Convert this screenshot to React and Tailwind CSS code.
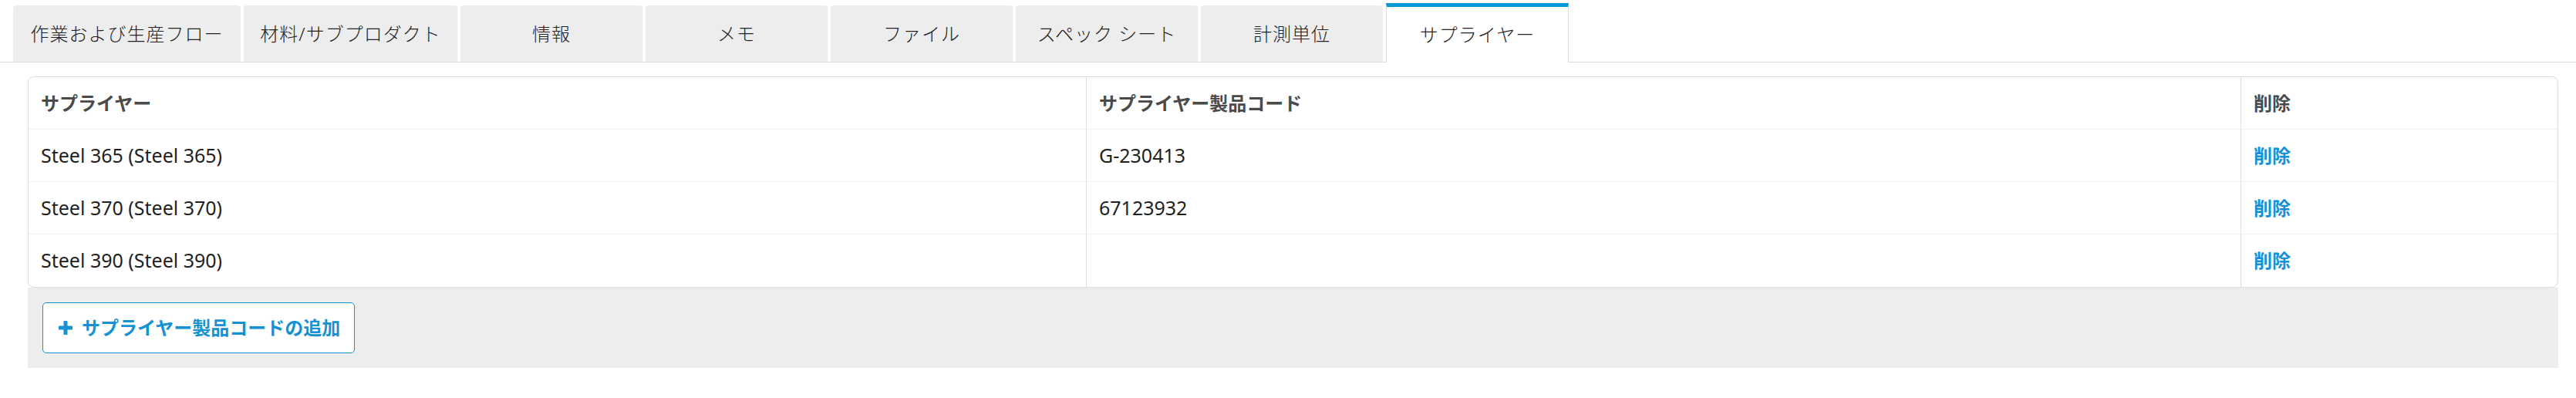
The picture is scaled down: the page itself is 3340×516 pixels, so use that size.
import React from "react";

const FONT = { fontFamily: '"Noto Sans", "Noto Sans CJK JP", sans-serif' };

const tabs = [
  { label: "作業および生産フロー", w: "w-[295px]" },
  { label: "材料/サブプロダクト", w: "w-[277px]" },
  { label: "情報", w: "w-[236px]" },
  { label: "メモ", w: "w-[236px]" },
  { label: "ファイル", w: "w-[236px]" },
  { label: "スペック シート", w: "w-[236px]" },
  { label: "計測単位", w: "w-[236px]" },
];

const rows = [
  { supplier: "Steel 365 (Steel 365)", code: "G-230413" },
  { supplier: "Steel 370 (Steel 370)", code: "67123932" },
  { supplier: "Steel 390 (Steel 390)", code: "" },
];

function PlusIcon() {
  return (
    <svg width="18" height="18" viewBox="0 0 18 18" className="shrink-0">
      <rect x="6.5" y="0" width="5" height="18" rx="1" fill="#1592d3" />
      <rect x="0" y="6.5" width="18" height="5" rx="1" fill="#1592d3" />
    </svg>
  );
}

export default function App() {
  return (
    <div className="w-[3340px] h-[516px] bg-white overflow-hidden" style={FONT}>
      {/* Tabs */}
      <div className="h-[81px] flex items-end gap-[4px] pl-[17px] border-b border-[#dddddd]">
        {tabs.map((t) => (
          <div
            key={t.label}
            className={`${t.w} h-[73px] bg-[#ededed] rounded-t-[4px] flex items-center justify-center text-[24px] font-light tracking-[1px] text-[#222222] whitespace-nowrap`}
          >
            {t.label}
          </div>
        ))}
        <div className="w-[237px] h-[77px] -mb-px bg-white border-t-[5px] border-x border-t-[#0796d8] border-x-[#dddddd] flex items-center justify-center text-[24px] font-light tracking-[1px] text-[#222222] whitespace-nowrap">
          サプライヤー
        </div>
      </div>

      {/* Content */}
      <div className="mt-[18px] pl-[36px] pr-[23px]">
        <div className="border border-[#dddddd] rounded-[8px] bg-white">
          <div className="grid grid-cols-[1371px_1497px_1fr]">
            {/* header */}
            <div className="h-[68px] flex items-center pl-[16px] border-b border-[#f0f0f0] text-[24px] font-bold text-[#4a4a4a]">
              サプライヤー
            </div>
            <div className="h-[68px] flex items-center pl-[16px] border-b border-l border-b-[#f0f0f0] border-l-[#dddddd] text-[24px] font-bold text-[#4a4a4a]">
              サプライヤー製品コード
            </div>
            <div className="h-[68px] flex items-center pl-[16px] border-b border-l border-b-[#f0f0f0] border-l-[#dddddd] text-[24px] font-bold text-[#4a4a4a]">
              削除
            </div>
            {rows.map((r, i) => {
              const last = i === rows.length - 1;
              const bb = last ? "" : "border-b border-b-[#f0f0f0]";
              return (
                <React.Fragment key={r.supplier}>
                  <div className={`h-[68px] flex items-center pl-[16px] text-[25px] text-[#1f1f1f] ${bb}`}>
                    {r.supplier}
                  </div>
                  <div className={`h-[68px] flex items-center pl-[16px] text-[25px] text-[#1f1f1f] border-l border-l-[#dddddd] ${bb}`}>
                    {r.code}
                  </div>
                  <div className={`h-[68px] flex items-center pl-[16px] text-[24px] font-bold text-[#1590d4] border-l border-l-[#dddddd] ${bb}`}>
                    削除
                  </div>
                </React.Fragment>
              );
            })}
          </div>
        </div>
        <div className="h-[104px] bg-[#ededed] pt-[19px] pl-[19px]">
          <button className="w-[405px] h-[66px] bg-white border border-[#1592d3] rounded-[5px] flex items-center gap-[12px] pl-[20px] text-[24px] font-bold text-[#1592d3] whitespace-nowrap">
            <PlusIcon />
            <span className="leading-none">サプライヤー製品コードの追加</span>
          </button>
        </div>
      </div>
    </div>
  );
}
